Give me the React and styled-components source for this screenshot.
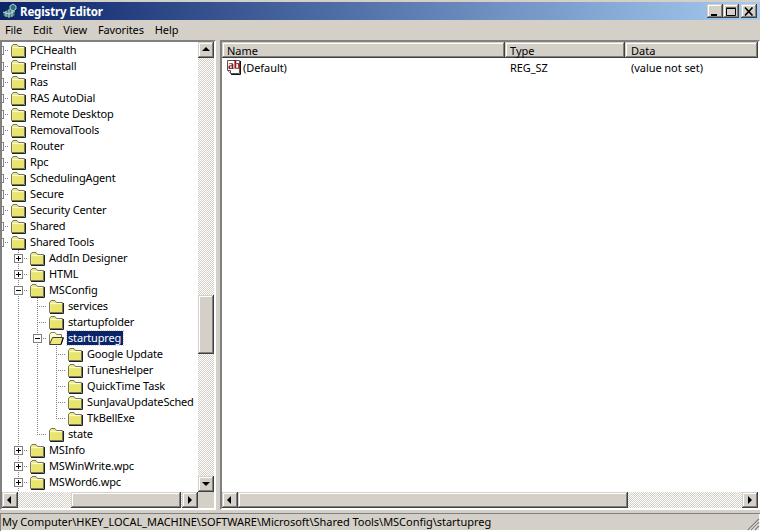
import React from 'react'
import styled, { createGlobalStyle, css } from 'styled-components'

const GlobalStyle = createGlobalStyle`
  html, body { margin: 0; padding: 0; background: #d4d0c8; }
  body { font: 11px "Noto Sans", "Liberation Sans", sans-serif; color: #000; }
`

const raised = css`
  background-color: #d4d0c8;
  box-shadow: inset -1px -1px 0 #404040, inset 1px 1px 0 #d4d0c8,
    inset -2px -2px 0 #808080, inset 2px 2px 0 #fff;
`
const hatch = css`
  background: repeating-conic-gradient(#d4d0c8 0 25%, #fff 0 50%) 0 0 / 2px 2px;
`

const Window = styled.div`
  width: 760px;
  height: 531px;
  display: flex;
  flex-direction: column;
  overflow: hidden;
  background: #d4d0c8;
  padding-top: 2px;
  box-sizing: border-box;
`
const TitleBar = styled.div`
  height: 18px;
  flex: none;
  display: flex;
  align-items: center;
  padding: 0 3px 0 2px;
  background: linear-gradient(90deg, #0a246a, #a6caf0);
  color: #fff;
  font-weight: 700;
  font-size: 11.5px;
  letter-spacing: -0.15px;
`
const TitleText = styled.span`
  margin-left: 2px;
  flex: 1;
`
const CaptionGroup = styled.div`
  display: flex;
`
const CaptionButton = styled.div`
  ${raised}
  width: 16px;
  height: 14px;
  margin-left: ${p => (p.$gap ? 2 : 0)}px;
  display: flex;
  align-items: center;
  justify-content: center;
`
const MenuBar = styled.div`
  height: 20px;
  flex: none;
  box-sizing: border-box;
  padding-bottom: 2px;
  display: flex;
  align-items: center;
  letter-spacing: -0.12px;
`
const MenuItem = styled.span`
  padding: 0 6px 0 5px;
`
const Body = styled.div`
  flex: 1;
  min-height: 0;
  display: flex;
  gap: 4px;
`
const Pane = styled.div`
  width: ${p => (p.$width ? `${p.$width}px` : 'auto')};
  flex: ${p => (p.$width ? 'none' : 1)};
  min-width: 0;
  box-sizing: border-box;
  border: 2px solid;
  border-color: #808080 #fff #fff #808080;
  display: grid;
  grid-template-columns: ${p => (p.$tree ? '1fr 16px' : '1fr')};
  grid-template-rows: 1fr 16px;
  background: #fff;
`
const Tree = styled.div`
  overflow: hidden;
  min-width: 0;
`
const TreeRow = styled.div`
  height: 16px;
  display: flex;
  align-items: center;
  margin-left: -12px;
  white-space: nowrap;
  letter-spacing: -0.16px;
`
const Guide = styled.div`
  width: 19px;
  height: 16px;
  flex: none;
  display: flex;
  align-items: center;
  justify-content: center;
  background-repeat: no-repeat;
  ${p => p.$kind === 'through' && css`
    background-image: repeating-linear-gradient(to bottom, #808080 0 1px, transparent 1px 2px);
    background-size: 1px 16px;
    background-position: 9px 0;
  `}
  ${p => p.$kind === 'tee' && css`
    background-image: repeating-linear-gradient(to bottom, #808080 0 1px, transparent 1px 2px),
      repeating-linear-gradient(to right, #808080 0 1px, transparent 1px 2px);
    background-size: 1px 16px, 10px 1px;
    background-position: 9px 0, 9px 8px;
  `}
  ${p => p.$kind === 'end' && css`
    background-image: repeating-linear-gradient(to bottom, #808080 0 1px, transparent 1px 2px),
      repeating-linear-gradient(to right, #808080 0 1px, transparent 1px 2px);
    background-size: 1px 9px, 10px 1px;
    background-position: 9px 0, 9px 8px;
  `}
`
const Expander = styled.div`
  width: 9px;
  height: 9px;
  box-sizing: border-box;
  border: 1px solid #808080;
  background: #fff;
  position: relative;
  &::before {
    content: '';
    position: absolute;
    left: 1px;
    top: 3px;
    width: 5px;
    height: 1px;
    background: #000;
  }
  ${p => p.$plus && css`
    &::after {
      content: '';
      position: absolute;
      left: 3px;
      top: 1px;
      width: 1px;
      height: 5px;
      background: #000;
    }
  `}
`
const FolderSlot = styled.div`
  width: 16px;
  height: 16px;
  flex: none;
  margin: 0 3px 0 1px;
`
const NodeLabel = styled.span`
  padding: 0 2px 0 1px;
  height: 14px;
  line-height: 14px;
  ${p => p.$selected && css`
    background: #0a246a;
    color: #fff;
    outline: 1px dotted #d4d0c8;
  `}
`
const HScroll = styled.div`
  display: flex;
  ${hatch}
  min-width: 0;
`
const VScroll = styled.div`
  display: flex;
  flex-direction: column;
  ${hatch}
`
const ScrollButton = styled.div`
  ${raised}
  width: 16px;
  height: 16px;
  flex: none;
  display: flex;
  align-items: center;
  justify-content: center;
`
const VTrack = styled.div`
  flex: 1;
  padding-top: ${p => p.$offset}px;
`
const VThumb = styled.div`
  ${raised}
  width: 16px;
  height: ${p => p.$size}px;
`
const HTrack = styled.div`
  flex: 1;
  padding-left: ${p => p.$offset}px;
`
const HThumb = styled.div`
  ${raised}
  height: 16px;
  width: ${p => p.$size}px;
`
const Corner = styled.div`
  background: #d4d0c8;
`
const List = styled.div`
  overflow: hidden;
  min-width: 0;
`
const HeaderRow = styled.div`
  display: flex;
  height: 16px;
`
const HeaderCell = styled.div`
  ${raised}
  width: ${p => p.$width}px;
  flex: ${p => (p.$grow ? 1 : 'none')};
  box-sizing: border-box;
  padding-left: ${p => (p.$grow ? 6 : 5)}px;
  line-height: 17px;
`
const DataRow = styled.div`
  display: flex;
  align-items: center;
  height: 16px;
  margin-top: 1px;
  letter-spacing: -0.06px;
`
const NameCell = styled.div`
  width: 283px;
  flex: none;
  display: flex;
  align-items: center;
  padding-left: 4px;
  box-sizing: border-box;
`
const Cell = styled.div`
  width: ${p => p.$width}px;
  flex: none;
  padding-left: ${p => p.$pad}px;
  box-sizing: border-box;
`
const StatusBar = styled.div`
  height: 21px;
  flex: none;
  padding-top: 3px;
  box-sizing: border-box;
  display: flex;
  position: relative;
`
const StatusText = styled.div`
  flex: 1;
  height: 18px;
  line-height: 17px;
  padding-left: 2px;
  box-sizing: border-box;
  letter-spacing: -0.03px;
  box-shadow: inset 1px 1px 0 #808080, inset -1px -1px 0 #fff;
`
const Grip = styled.svg`
  position: absolute;
  right: 0;
  bottom: 0;
`
const RegIconBox = styled.div`
  width: 17px;
  height: 16px;
  position: relative;
  flex: none;
`
const RegAb = styled.span`
  position: absolute;
  left: 2px;
  top: 1px;
  width: 12px;
  text-align: center;
  color: #8b0f1e;
  letter-spacing: -0.3px;
  font: 700 12px/10px "Liberation Serif", serif;
`

const ClosedFolder = () => (
  <svg width="16" height="16" viewBox="0 0 16 16">
    <path d="M1.5 4.5 L3 2.5 H7 L8.5 4.5 H14.5 V14.5 H1.5 Z" fill="#eee97e" stroke="#77775a" />
    <path d="M2.5 5.5 H13.5" stroke="#fffbd0" />
    <path d="M15.5 5 V15.5 H2" fill="none" stroke="#202020" />
    <rect x="3" y="7" width="11" height="7" fill="#e8e46e" />
  </svg>
)
const OpenFolder = () => (
  <svg width="16" height="16" viewBox="0 0 16 16">
    <path d="M1.5 13.5 V4.5 L3 2.5 H7 L8.5 4.5 H13.5 V7" fill="#fffbd0" stroke="#808060" />
    <path d="M1.5 14.5 L4.5 7.5 H15 L13 14.5 Z" fill="#efe778" stroke="#404030" />
    <path d="M13 14.5 L15.5 7.5" stroke="#000" />
  </svg>
)
// page with a curled lower corner, the "ab" sits on top as real text
const StringIcon = () => (
  <RegIconBox>
    <svg width="17" height="16" viewBox="0 0 17 16">
      <path d="M1.5 1.5 H13.5 V14.5 H4.5 L1.5 11.5 Z" fill="#fff" stroke="#555" />
      <path d="M14.5 2 V15.5 H5" fill="none" stroke="#111" />
      <path d="M1.5 11.5 H4.5 V14.5" fill="#ddd" stroke="#555" />
    </svg>
    <RegAb>ab</RegAb>
  </RegIconBox>
)
const AppIcon = () => (
  <svg width="16" height="16" viewBox="0 0 16 16">
    <path d="M1 9 L7 6 L13 8 V13 L7 15 L1 13 Z" fill="#4d7f8c" stroke="#0e2a30" strokeWidth=".8" />
    <path d="M7 6 V15 M1 9 L7 11 L13 8 M4 8 V14 M10 7 V14" stroke="#cfe7e7" strokeWidth=".8" fill="none" />
    <path d="M8 3 L11 1 L14 3 L14 6 L11 8 L8 6 Z" fill="#2d6f78" stroke="#d9f0f0" strokeWidth=".8" />
  </svg>
)
const Arrow = ({ dir }) => {
  const points = {
    up: '4,1 0,5 8,5',
    down: '0,2 8,2 4,6',
    left: '5,0 5,8 1,4',
    right: '2,0 2,8 6,4',
  }[dir]
  return (
    <svg width="8" height="8" viewBox="0 0 8 8">
      <polygon points={points} fill="#000" />
    </svg>
  )
}

const through = n => Array.from({ length: n }, () => 'through')

// the last row is scrolled under the bottom bar, only its folder top shows
const rows = [
  ['PCHealth', 0, '+'], ['Preinstall', 0, '+'], ['Ras', 0, '+'], ['RAS AutoDial', 0, '+'],
  ['Remote Desktop', 0, '+'], ['RemovalTools', 0, '+'], ['Router', 0, '+'], ['Rpc', 0, '+'],
  ['SchedulingAgent', 0, '+'], ['Secure', 0, '+'], ['Security Center', 0, '+'], ['Shared', 0, '+'],
  ['Shared Tools', 0, '-'],
  ['AddIn Designer', 1, '+'], ['HTML', 1, '+'], ['MSConfig', 1, '-'],
  ['services', 2], ['startupfolder', 2], ['startupreg', 2, '-', false, true],
  ['Google Update', 3], ['iTunesHelper', 3], ['QuickTime Task', 3], ['SunJavaUpdateSched', 3],
  ['TkBellExe', 3, null, true],
  ['state', 2, null, true],
  ['MSInfo', 1, '+'], ['MSWinWrite.wpc', 1, '+'], ['MSWord6.wpc', 1, '+'], ['', 1, '+'],
]

const App = () => (
  <Window>
    <GlobalStyle />
    <TitleBar>
      <AppIcon />
      <TitleText>Registry Editor</TitleText>
      <CaptionGroup>
        <CaptionButton>
          <svg width="10" height="9" viewBox="0 0 10 9"><rect x="1" y="7" width="6" height="2" /></svg>
        </CaptionButton>
        <CaptionButton>
          <svg width="10" height="9" viewBox="0 0 10 9"><path d="M0.5 1.5 H9.5 V8.5 H0.5 Z M0 1 H10" fill="none" stroke="#000" /></svg>
        </CaptionButton>
        <CaptionButton $gap>
          <svg width="10" height="9" viewBox="0 0 10 9"><path d="M1 0.5 L8.5 8.5 M8.5 0.5 L1 8.5" stroke="#000" strokeWidth="1.6" /></svg>
        </CaptionButton>
      </CaptionGroup>
    </TitleBar>
    <MenuBar>
      {['File', 'Edit', 'View', 'Favorites', 'Help'].map(m => <MenuItem key={m}>{m}</MenuItem>)}
    </MenuBar>
    <Body>
      <Pane $width={216} $tree>
        <Tree>
          {rows.map(([name, level, box, last, selected], idx) => (
            <TreeRow key={idx}>
              {through(level).map((k, i) => <Guide key={i} $kind={k} />)}
              <Guide $kind={last ? 'end' : 'tee'}>
                {box && <Expander $plus={box === '+'} />}
              </Guide>
              <FolderSlot>{selected ? <OpenFolder /> : <ClosedFolder />}</FolderSlot>
              {name && <NodeLabel $selected={selected}>{name}</NodeLabel>}
            </TreeRow>
          ))}
        </Tree>
        <VScroll>
          <ScrollButton><Arrow dir="up" /></ScrollButton>
          <VTrack $offset={237}><VThumb $size={59} /></VTrack>
          <ScrollButton><Arrow dir="down" /></ScrollButton>
        </VScroll>
        <HScroll>
          <ScrollButton><Arrow dir="left" /></ScrollButton>
          <HTrack $offset={53}><HThumb $size={110} /></HTrack>
          <ScrollButton><Arrow dir="right" /></ScrollButton>
        </HScroll>
        <Corner />
      </Pane>
      <Pane>
        <List>
          <HeaderRow>
            <HeaderCell $width={283}>Name</HeaderCell>
            <HeaderCell $width={120}>Type</HeaderCell>
            <HeaderCell $grow>Data</HeaderCell>
          </HeaderRow>
          <DataRow>
            <NameCell><StringIcon />(Default)</NameCell>
            <Cell $width={120} $pad={5}>REG_SZ</Cell>
            <Cell $width={133} $pad={6}>(value not set)</Cell>
          </DataRow>
        </List>
        <HScroll>
          <ScrollButton><Arrow dir="left" /></ScrollButton>
          <HTrack $offset={0}><HThumb $size={390} /></HTrack>
          <ScrollButton><Arrow dir="right" /></ScrollButton>
        </HScroll>
      </Pane>
    </Body>
    <StatusBar>
      <StatusText>My Computer\HKEY_LOCAL_MACHINE\SOFTWARE\Microsoft\Shared Tools\MSConfig\startupreg</StatusText>
      <Grip width="13" height="13" viewBox="0 0 13 13">
        <path d="M12 1 L1 12 M12 4 L4 12 M12 8 L8 12" stroke="#808080" strokeWidth="1.4" />
        <path d="M12 2.5 L2.5 12 M12 5.5 L5.5 12 M12 9.5 L9.5 12" stroke="#fff" strokeWidth=".8" />
      </Grip>
    </StatusBar>
  </Window>
)

export default App
